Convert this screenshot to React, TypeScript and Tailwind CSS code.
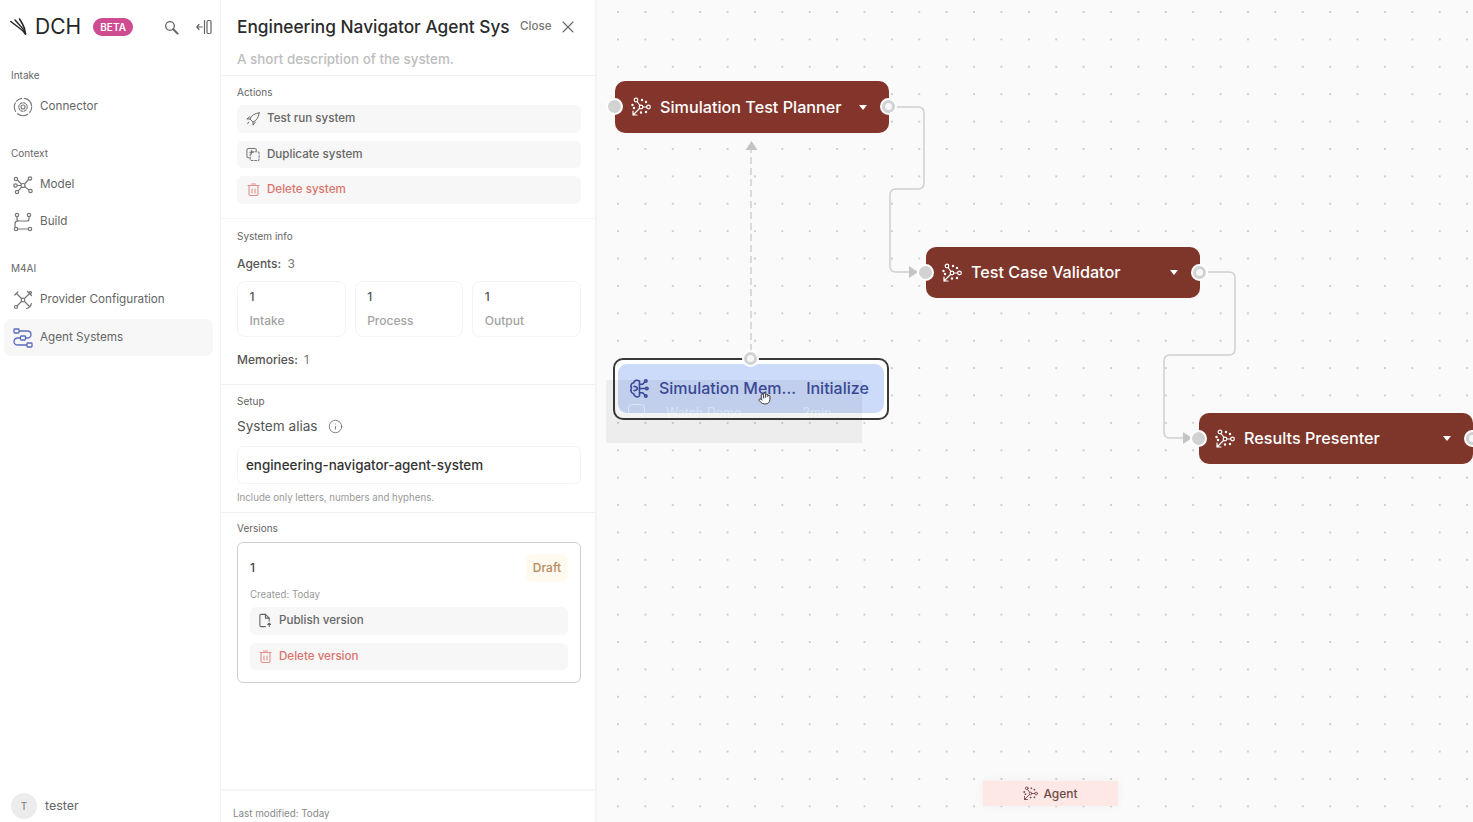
import type { ReactNode } from 'react';
import { Hand, Info, X } from 'lucide-react';

function LogoIcon() {
  return (
    <svg width="18" height="18" viewBox="0 0 18 18" fill="none" stroke="#262626" strokeWidth="1.500" strokeLinecap="round">
      <path d="M0.800 3.500L8 9Q13 12.500 15.500 16" />
      <path d="M5 2L10 7.500Q14 11 15.500 16" />
      <path d="M9.500 1L12.500 6Q15 10 15.500 16" />
    </svg>
  );
}

function SearchIcon() {
  return (
    <svg width="15" height="15" viewBox="0 0 15 15" fill="none" stroke="#666" strokeLinecap="round">
      <circle cx="6" cy="6" r="4.300" strokeWidth="1.300" />
      <path d="M9.300 9.300l4.300 4.300" strokeWidth="2" />
    </svg>
  );
}

function CollapseIcon() {
  return (
    <svg width="16" height="16" viewBox="0 0 16 16" fill="none" stroke="#666" strokeWidth="1.200" strokeLinecap="round" strokeLinejoin="round">
      <path d="M0.800 8h5.500M3 5.500L0.800 8 3 10.500" />
      <path d="M8.500 1.500v13" />
      <rect x="11" y="1.500" width="4" height="13" rx="1.200" />
    </svg>
  );
}

function ConnectorIcon() {
  return (
    <svg width="20" height="20" viewBox="0 0 20 20" fill="none" stroke="#777" strokeWidth="1.100" strokeLinecap="round">
      <circle cx="10" cy="10" r="8.700" strokeDasharray="6 2.500 11 3 9 2" />
      <circle cx="10" cy="10" r="2" />
      <circle cx="10" cy="10" r="4.200" strokeDasharray="2 1.300" />
    </svg>
  );
}

function ModelIcon() {
  return (
    <svg width="20" height="20" viewBox="0 0 20 20" fill="none" stroke="#777" strokeWidth="1.200">
      <circle cx="3" cy="4" r="1.700" />
      <circle cx="17" cy="3.500" r="1.700" />
      <circle cx="2.500" cy="10.500" r="1.700" />
      <circle cx="4" cy="17" r="1.700" />
      <circle cx="17.500" cy="16" r="1.700" />
      <circle cx="10" cy="10.500" r="2" />
      <path d="M4.300 5l4.200 4M15.600 4.500l-4 4.500M4.200 10.500H8M5.200 15.800L8.700 12M16 15l-4.300-3.400" />
    </svg>
  );
}

function BuildIcon() {
  return (
    <svg width="20" height="20" viewBox="0 0 20 20" fill="none" stroke="#777" strokeWidth="1.200">
      <circle cx="4" cy="3" r="1.700" />
      <circle cx="16" cy="3" r="1.700" />
      <circle cx="3" cy="17" r="1.700" />
      <circle cx="17" cy="17" r="1.700" />
      <path d="M4 4.700V7q0 2 2 2h8q2 0 2-2V4.700M5 9.200H4Q2 9.500 2 12v3.300M4.700 17h10.600" />
    </svg>
  );
}

function ProviderIcon() {
  return (
    <svg width="20" height="20" viewBox="0 0 20 20" fill="none" stroke="#777" strokeWidth="1.200" strokeLinecap="round">
      <circle cx="10" cy="10" r="1.800" />
      <path d="M8.500 8.500L3.500 3.500M1.800 5l3-3M11.500 8.500L16 4M14.500 1.500l4 4M8.500 11.500L4 16M11.500 11.500L16 16M13.500 18.500q3.500-.5 5-5" />
      <circle cx="3" cy="17" r="1.500" />
      <circle cx="17.500" cy="2.500" r="1" />
    </svg>
  );
}

function SystemsIcon() {
  return (
    <svg width="20" height="20" viewBox="0 0 20 20" fill="none" stroke="#5b6bc0" strokeWidth="1.300">
      <rect x="1" y="1" width="5" height="4" rx="0.800" />
      <rect x="7.500" y="8" width="5" height="4" rx="0.800" />
      <rect x="14" y="15" width="5" height="4" rx="0.800" />
      <path d="M6 3h8q4 0 4 3.500T14 10h-1.500M7.500 10H5q-4 0-4 3.500T5 17h9" />
    </svg>
  );
}

function RocketIcon() {
  return (
    <svg width="16" height="16" viewBox="0 0 16 16" fill="none" stroke="#666" strokeWidth="1.100" strokeLinecap="round" strokeLinejoin="round">
      <path d="M15 1C10 1.500 6 4 4.500 8L8 11.500C12 10 14.500 6 15 1Z" />
      <path d="M4.500 8H1L4.500 5.200M8 11.500V15L10.800 11.500" />
      <path d="M3.200 11.500L1.800 13.500" />
    </svg>
  );
}

function DuplicateIcon() {
  return (
    <svg width="15" height="15" viewBox="0 0 15 15" fill="none" stroke="#777" strokeWidth="1.100" strokeLinecap="round">
      <path d="M3.500 11H2.500Q1 11 1 9.500v-7Q1 1 2.500 1h7Q11 1 11 2.500v1" />
      <rect x="4.500" y="4.500" width="9.500" height="9.500" rx="1.500" strokeDasharray="2 1.700" />
      <path d="M6 3v4M4 5h4" />
    </svg>
  );
}

function TrashIcon() {
  return (
    <svg width="13" height="13" viewBox="0 0 13 13" fill="none" stroke="#e2908a" strokeWidth="1.100" strokeLinecap="round">
      <rect x="2" y="2.500" width="9" height="10" rx="1.500" />
      <path d="M1 2.500h11M4.500 1h4M5 6v4M8 6v4" />
    </svg>
  );
}

function PublishIcon() {
  return (
    <svg width="15" height="15" viewBox="0 0 15 15" fill="none" stroke="#666" strokeWidth="1.200" strokeLinecap="round" strokeLinejoin="round">
      <path d="M8 14H3.500Q2 14 2 12.500v-10Q2 1 3.500 1H8l4 4v3" />
      <path d="M8 1v4h4" />
      <path d="M12 14v-3.500M10.500 11.800L12 10.300l1.500 1.500" />
    </svg>
  );
}

function MemoryIcon() {
  return (
    <svg width="21" height="21" viewBox="0 0 20 20" fill="none" stroke="#3d4c9f" strokeWidth="1.500" strokeLinecap="round" strokeLinejoin="round">
      <path d="M10 3C8 1.500 5 2 4.500 4.500C2 5 1 7.500 2.500 9.500C1 11.500 2 14.500 4.500 15C5 18 8.500 19 10 17Z" />
      <path d="M4.800 8Q7 8 8 9.500M4.800 12Q7 12 8 10.500" />
      <path d="M10 6H13L15 3.800M10 10H15.500M10 14H13L15 16.200" />
      <circle cx="16" cy="2.800" r="1.200" />
      <circle cx="17" cy="10" r="1.200" />
      <circle cx="16" cy="17.200" r="1.200" />
    </svg>
  );
}

function AgentIcon({ color = 'white', size = 20 }: { color?: string; size?: number }) {
  return (
    <svg width={size} height={size} viewBox="0 0 20 20" fill="none" stroke={color} strokeWidth="1.200" strokeLinecap="round">
      <circle cx="5" cy="3" r="1.800" />
      <circle cx="10" cy="10" r="1.800" />
      <circle cx="17.500" cy="10" r="1.800" />
      <path d="M6 4.500L9 8.500M11.800 10h3.900M8.500 11.500L2 18M2 14v4h4" />
      <circle cx="11" cy="3" r="0.600" fill={color} />
      <circle cx="15" cy="5" r="0.600" fill={color} />
      <circle cx="1.500" cy="8" r="0.600" fill={color} />
      <circle cx="3" cy="11" r="0.600" fill={color} />
      <circle cx="10" cy="15.500" r="0.600" fill={color} />
      <circle cx="15" cy="15" r="0.600" fill={color} />
    </svg>
  );
}

function NavLabel({ children }: { children: ReactNode }) {
  return <div className="pl-[11px] text-[10px] leading-4 text-[#666]">{children}</div>;
}

function NavItem({ icon, label, active }: { icon: ReactNode; label: string; active?: boolean }) {
  return (
    <div className={`mx-1 flex h-[37px] w-[209px] items-center gap-[7px] rounded-lg pl-[9px] text-[11.700px] text-[#666] ${active ? 'bg-[#f7f7f7]' : ''}`}>
      {icon}
      <span>{label}</span>
    </div>
  );
}

function Sidebar() {
  return (
    <aside className="flex h-full w-[221px] shrink-0 flex-col border-r border-[#f3f3f3] bg-white">
      <div className="flex h-[54px] items-center pl-[10px]">
        <LogoIcon />
        <span className="ml-[7px] text-[21px] font-normal text-[#262626]">DCH</span>
        <span className="ml-[12px] flex h-[18px] w-[40px] items-center justify-center rounded-full bg-[#cf4c91] text-[10px] font-semibold text-white">BETA</span>
        <span className="ml-[31px]"><SearchIcon /></span>
        <span className="ml-[17px]"><CollapseIcon /></span>
      </div>
      <div className="mt-[13px]"><NavLabel>Intake</NavLabel></div>
      <div className="mt-[5px]"><NavItem icon={<ConnectorIcon />} label="Connector" /></div>
      <div className="mt-[20px]"><NavLabel>Context</NavLabel></div>
      <div className="mt-[5px]"><NavItem icon={<ModelIcon />} label="Model" /></div>
      <NavItem icon={<BuildIcon />} label="Build" />
      <div className="mt-[20px]"><NavLabel>M4AI</NavLabel></div>
      <div className="mt-[5px]"><NavItem icon={<ProviderIcon />} label="Provider Configuration" /></div>
      <div className="mt-[1px]"><NavItem icon={<SystemsIcon />} label="Agent Systems" active /></div>
      <div className="mt-auto flex h-[32px] items-center pl-[11px]">
        <span className="flex h-[26px] w-[26px] items-center justify-center rounded-full bg-[#ececec] text-[10px] text-[#777]">T</span>
        <span className="ml-[8px] text-[12.500px] text-[#666]">tester</span>
      </div>
    </aside>
  );
}

function SectionLabel({ children }: { children: ReactNode }) {
  return <div className="text-[10px] leading-4 text-[#666]">{children}</div>;
}

function ActionButton({ icon, label, danger, nested }: { icon: ReactNode; label: string; danger?: boolean; nested?: boolean }) {
  return (
    <div className={`flex h-[27.500px] items-center gap-[7px] rounded-md bg-[#f7f7f7] text-[11.600px] font-medium ${nested ? 'pl-[8px]' : 'pl-[9px]'} ${danger ? 'text-[#d9746c]' : 'text-[#666]'}`}>
      <span className="flex w-[14px] justify-center">{icon}</span>
      <span>{label}</span>
    </div>
  );
}

function StatCard({ label }: { label: string }) {
  return (
    <div className="h-[56px] flex-1 rounded-lg border border-[#f4f4f4] pl-[11.500px] pt-[5px]">
      <div className="text-[12px] font-medium leading-5 text-[#555]">1</div>
      <div className="mt-[3.500px] text-[12px] font-medium leading-5 text-[#a3a3a3]">{label}</div>
    </div>
  );
}

function Panel() {
  return (
    <section className="flex h-full w-[376px] shrink-0 flex-col border-r-2 border-[#f3f3f3] bg-white">
      <div className="h-[76px] border-b border-[#f1f1f1] pl-[16px] pr-[14px]">
        <div className="flex h-[51px] items-center pt-[3px]">
          <div className="w-[272px] whitespace-nowrap text-[17.300px] font-medium text-[#2b2b2b]">Engineering Navigator Agent Sys</div>
          <span className="ml-[11px] text-[11.600px] font-medium text-[#777]">Close</span>
          <X className="ml-[7px] h-[20px] w-[20px] text-[#666]" strokeWidth={1.300} />
        </div>
        <div className="text-[13.400px] font-medium leading-4 text-[#bdbdbd]">A short description of the system.</div>
      </div>

      <div className="h-[143px] border-b border-[#f5f5f5] pl-[16px] pr-[14px] pt-[8px]">
        <SectionLabel>Actions</SectionLabel>
        <div className="mt-[5px] flex flex-col gap-2">
          <ActionButton icon={<RocketIcon />} label="Test run system" />
          <ActionButton icon={<DuplicateIcon />} label="Duplicate system" />
          <ActionButton icon={<TrashIcon />} label="Delete system" danger />
        </div>
      </div>

      <div className="h-[166px] border-b border-[#f1f1f1] pl-[16px] pr-[14px] pt-[9px]">
        <SectionLabel>System info</SectionLabel>
        <div className="mt-[10px] text-[12px] font-medium leading-5 text-[#555]">
          Agents: <span className="ml-[3px] font-normal text-[#777]">3</span>
        </div>
        <div className="mt-[7px] flex gap-[9px]">
          <StatCard label="Intake" />
          <StatCard label="Process" />
          <StatCard label="Output" />
        </div>
        <div className="mt-[13px] text-[12px] font-medium leading-5 text-[#555]">
          Memories: <span className="ml-[3px] font-normal text-[#777]">1</span>
        </div>
      </div>

      <div className="h-[128px] border-b border-[#f1f1f1] pl-[16px] pr-[14px] pt-[8px]">
        <SectionLabel>Setup</SectionLabel>
        <div className="mt-[7px] flex items-center gap-[10px] text-[13.600px] leading-5 text-[#555]">
          System alias
          <Info className="h-[15px] w-[15px] text-[#666]" strokeWidth={1.300} />
        </div>
        <div className="mt-[10px] flex h-[38px] items-center rounded-md border border-[#f4f4f4] pl-[8px] text-[13.400px] font-medium text-[#333]">engineering-navigator-agent-system</div>
        <div className="mt-[6px] text-[9.700px] leading-4 text-[#999]">Include only letters, numbers and hyphens.</div>
      </div>

      <div className="pl-[16px] pr-[14px] pt-[7px]">
        <SectionLabel>Versions</SectionLabel>
        <div className="mt-[6px] h-[141px] rounded-md border border-[#cfcfcf] px-[12px] pt-[11px]">
          <div className="flex h-[28px] items-center justify-between">
            <span className="text-[12px] font-medium text-[#444]">1</span>
            <span className="flex h-[28px] w-[42px] items-center justify-center rounded-md bg-[#fff9f0] text-[12px] font-medium text-[#b58a5c]">Draft</span>
          </div>
          <div className="mt-[5px] text-[9.700px] leading-4 text-[#999]">Created: Today</div>
          <div className="mt-[4px] flex flex-col gap-2">
            <ActionButton icon={<PublishIcon />} label="Publish version" nested />
            <ActionButton icon={<TrashIcon />} label="Delete version" danger nested />
          </div>
        </div>
      </div>

      <div className="mt-auto h-[33px] border-t-2 border-[#f5f5f5] pl-[12px] pt-[15px] text-[9.800px] leading-4 text-[#888]">Last modified: Today</div>
    </section>
  );
}

function Handle({ className, ring }: { className: string; ring?: boolean }) {
  return (
    <span className={`absolute flex h-[17px] w-[17px] items-center justify-center rounded-full border-2 border-white bg-[#d2d2d2] ${className}`}>
      {ring && <span className="h-[7px] w-[7px] rounded-full bg-[#f7f7f7]" />}
    </span>
  );
}

function AgentNode({ label, className }: { label: string; className: string }) {
  return (
    <div className={`absolute flex w-[274px] items-center rounded-[10px] pl-[16px] text-[16.200px] font-medium text-white ${className}`}>
      <AgentIcon />
      <span className="ml-[9px] whitespace-nowrap">{label}</span>
      <span className="ml-auto mr-[22px] h-0 w-0 border-x-[4.500px] border-t-[5px] border-x-transparent border-t-white" />
      <Handle className="-left-[9px] top-[17px]" />
      <Handle className="-right-[8px] top-[17px]" ring />
    </div>
  );
}

function Edges() {
  return (
    <svg className="absolute inset-0" width="876" height="822" viewBox="597 0 876 822" fill="none" stroke="#d0d0d0" strokeWidth="1.500">
      <path d="M896 107h22q6 0 6 6v70q0 6-6 6h-22q-6 0-6 6v71q0 6 6 6h14" />
      <path d="M1207 272h22q6 0 6 6v71q0 6-6 6h-59q-6 0-6 6v71q0 6 6 6h14" />
      <path d="M751 351V150" strokeDasharray="7 4" />
      <path d="M745.500 150l6-9 6 9z" fill="#c4c4c4" stroke="none" />
      <path d="M909 266l9 6-9 6z" fill="#c4c4c4" stroke="none" />
      <path d="M1183 432l9 6-9 6z" fill="#c4c4c4" stroke="none" />
    </svg>
  );
}

function Canvas() {
  return (
    <main className="relative h-full flex-1 overflow-hidden bg-[#fafafa] bg-[radial-gradient(#cfcfcf_0.800px,transparent_1px)] bg-[size:27.400px_27.400px] bg-[position:7.300px_-1.700px]">
      <Edges />
      <AgentNode label="Simulation Test Planner" className="left-[18px] top-[81px] h-[52px] bg-[#83342b]" />
      <AgentNode label="Test Case Validator" className="left-[329px] top-[247px] h-[51px] bg-[#7e362b]" />
      <AgentNode label="Results Presenter" className="left-[602px] top-[413px] h-[51px] bg-[#7e362b]" />

      <div className="absolute left-[16px] top-[358px] h-[62px] w-[276px] rounded-[10px] border-2 border-[#3a3a3a] bg-white px-[3px] pt-[4px]">
        <div className="flex h-[49px] items-center rounded-[9px] bg-[#ccdbf9] pb-[1px] pl-[11px] text-[16px] font-medium text-[#3d4c9f]">
          <MemoryIcon />
          <span className="ml-[9px] whitespace-nowrap">Simulation Mem...</span>
          <span className="ml-[10px]">Initialize</span>
        </div>
        <Handle className="-top-[10px] left-[127px]" ring />
      </div>

      <div className="absolute left-[9px] top-[380px] flex h-[63px] w-[256px] items-start bg-black/[0.05] pl-[22px] pt-[24px] text-[12.500px] text-white/40">
        <span className="h-[12px] w-[17px] rounded-sm border border-white/40" />
        <span className="ml-[21px]">Watch Demo</span>
        <span className="ml-[61px]">2min</span>
      </div>

      <Hand className="absolute left-[161px] top-[392px] h-[13px] w-[13px] fill-white text-[#333]" strokeWidth={1.800} />

      <div className="absolute bottom-[16px] left-[386px] flex h-[25px] w-[135px] items-center justify-center gap-[5px] bg-[#fde8e6] text-[12px] font-medium text-[#6e4a47] shadow-[0_0_10px_rgba(0,0,0,0.05)]">
        <AgentIcon color="#6e4a47" size={15} />
        <span>Agent</span>
      </div>
    </main>
  );
}

export default function App() {
  return (
    <div className="flex h-screen w-screen overflow-hidden bg-white font-['Inter',sans-serif]">
      <Sidebar />
      <Panel />
      <Canvas />
    </div>
  );
}
